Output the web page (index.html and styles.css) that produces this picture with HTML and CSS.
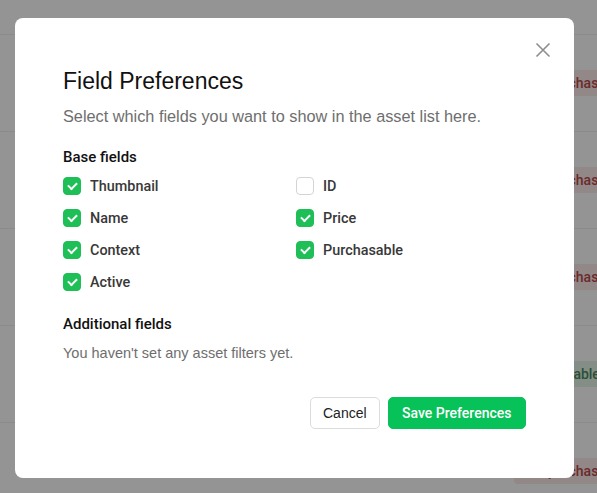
FILE: index.html
```html
<!DOCTYPE html>
<html>
<head>
<title>Assets</title>
<link rel="stylesheet" href="styles.css">
</head>
<body>

<div class="asset-list">
  <div class="asset-row"><span class="tag tag-red">Not purchasable</span></div>
  <div class="asset-row"><span class="tag tag-red">Not purchasable</span></div>
  <div class="asset-row"><span class="tag tag-red">Not purchasable</span></div>
  <div class="asset-row"><span class="tag tag-green">Purchasable</span></div>
  <div class="asset-row"><span class="tag tag-red">Not purchasable</span></div>
</div>

<div class="overlay">
  <div class="modal">
    <button class="close-btn" aria-label="Close">
      <svg width="16" height="16" viewBox="0 0 16 16"><path d="M1.5 1.5 L14.5 14.5 M14.5 1.5 L1.5 14.5" stroke="#8e8e8e" stroke-width="1.6" fill="none"/></svg>
    </button>

    <h2 class="modal-title">Field Preferences</h2>
    <p class="modal-sub">Select which fields you want to show in the asset list here.</p>

    <h3 class="section-title">Base fields</h3>
    <div class="field-grid">
      <label class="field"><span class="box on"></span>Thumbnail</label>
      <label class="field"><span class="box"></span>ID</label>
      <label class="field"><span class="box on"></span>Name</label>
      <label class="field"><span class="box on"></span>Price</label>
      <label class="field"><span class="box on"></span>Context</label>
      <label class="field"><span class="box on"></span>Purchasable</label>
      <label class="field"><span class="box on"></span>Active</label>
    </div>

    <h3 class="section-title extra">Additional fields</h3>
    <p class="empty">You haven't set any asset filters yet.</p>

    <div class="actions">
      <button class="btn btn-cancel">Cancel</button>
      <button class="btn btn-save">Save Preferences</button>
    </div>
  </div>
</div>

</body>
</html>
```

FILE: styles.css
```css
/* styles.css */

body {
  margin: 0;
  background: #fff;
  font-family: "Liberation Sans", Arial, sans-serif;
  overflow: hidden;
}

.asset-list {
  padding-top: 34px;
  overflow: hidden;
  height: 493px;
  box-sizing: border-box;
}
.asset-row {
  height: 96px;
  border-top: 1px solid #f0f0f0;
  display: flex;
  align-items: center;
  padding-left: 514px;
  white-space: nowrap;
}
.tag {
  font-family: Roboto, sans-serif;
  font-size: 14px;
  font-weight: 500;
  padding: 5px 8px;
  border-radius: 4px;
}
.tag-red {
  background: #fdeaea;
  color: #b94a4a;
}
.tag-green {
  background: #e3f5e9;
  color: #4a8a5e;
}

.overlay {
  position: fixed;
  inset: 0;
  background: rgba(0, 0, 0, 0.42);
  display: flex;
  align-items: flex-start;
  padding: 18px 0 0 15px;
}

.modal {
  position: relative;
  width: 559px;
  height: 460px;
  box-sizing: border-box;
  background: #fff;
  border-radius: 8px;
  padding: 47px 48px 0 48px;
}

.close-btn {
  position: absolute;
  top: 24px;
  right: 23px;
  background: none;
  border: 0;
  padding: 0;
  width: 16px;
  height: 16px;
}

.modal-title {
  margin: 0;
  font-size: 23px;
  font-weight: 400;
  line-height: 32px;
  color: #111;
}
.modal-sub {
  margin: 8px 0 0;
  font-size: 16.3px;
  line-height: 22px;
  color: #6e6e6e;
}

.section-title {
  margin: 19px 0 0;
  font-family: Roboto, sans-serif;
  font-size: 15px;
  font-weight: 500;
  line-height: 22px;
  color: #111;
}
.section-title.extra {
  margin-top: 21px;
}

.field-grid {
  display: grid;
  grid-template-columns: 233px 1fr;
  row-gap: 12px;
  margin-top: 8px;
}
.field {
  display: flex;
  align-items: center;
  gap: 9px;
  font-family: Roboto, sans-serif;
  font-size: 14.4px;
  font-weight: 500;
  color: #383838;
  height: 20px;
}
.box {
  width: 18px;
  height: 18px;
  box-sizing: border-box;
  border: 1px solid #d4d4d4;
  border-radius: 4px;
  background: #fff;
  display: flex;
  align-items: center;
  justify-content: center;
}
.box.on {
  background: #1fbf58;
  border-color: #1fbf58;
}
.box.on::after {
  content: "";
  width: 7px;
  height: 4px;
  border-left: 2px solid #fff;
  border-bottom: 2px solid #fff;
  transform: translateY(-1px) rotate(-45deg);
}

.empty {
  margin: 8px 0 0;
  font-size: 14.5px;
  line-height: 20px;
  color: #6e6e6e;
}

.actions {
  display: flex;
  justify-content: flex-end;
  gap: 8px;
  margin-top: 34px;
}
.btn {
  height: 32px;
  font-family: inherit;
  font-size: 14px;
  border-radius: 5px;
  padding: 0 12px;
}
.btn-cancel {
  background: #fff;
  border: 1px solid #dcdcdc;
  color: #222;
}
.btn-save {
  background: #06c258;
  border: 1px solid #06c258;
  color: #fff;
  font-family: Roboto, sans-serif;
  font-weight: 500;
  padding: 0 13.5px;
}
```
